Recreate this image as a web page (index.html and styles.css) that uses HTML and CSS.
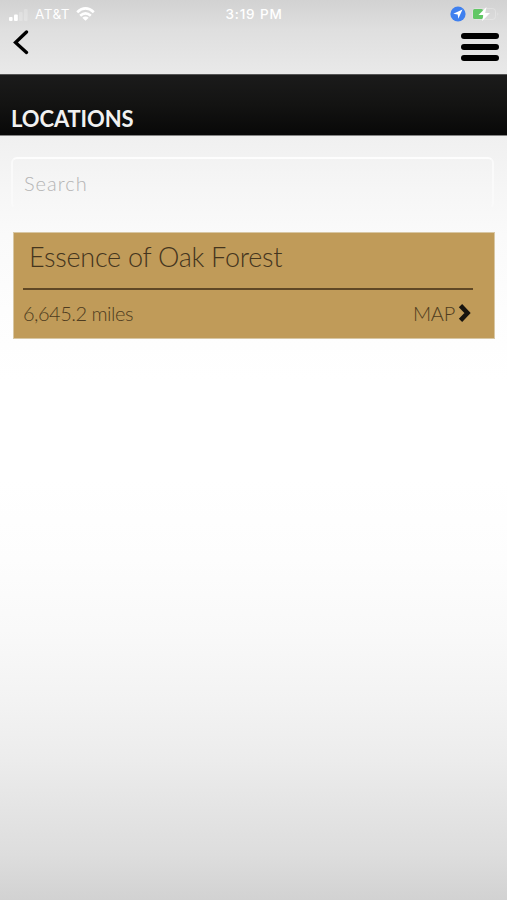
FILE: index.html
```html
<!DOCTYPE html>
<html lang="en">
<head>
<meta charset="utf-8">
<title>Locations</title>
<link rel="stylesheet" href="styles.css">
</head>
<body>
<div class="screen">
  <header class="top">
    <div class="status">
      <div class="carrier">
        <svg width="22" height="14" viewBox="0 0 22 14" fill="#fff"><rect x="1" y="8" width="3.6" height="4" rx="1"/><rect x="6" y="5.5" width="3.8" height="6.500" rx="1"/><rect x="11" y="3" width="3.600" height="9" rx="1" opacity=".22"/><rect x="16" y="0" width="3.600" height="12" rx="1" opacity=".22"/></svg>
        <span class="network">AT&amp;T</span>
        <svg class="wifi" width="19" height="14" viewBox="0 0 19 14" fill="none" stroke="#fff" stroke-width="2.700"><path d="M1.200 5.200Q9.500-2.300 17.800 5.200M4.200 8.700Q9.500 4 14.800 8.700"/><path d="M9.500 13.800L6.300 10.800Q9.500 8.300 12.700 10.800Z" fill="#fff" stroke="none"/></svg>
      </div>
      <time class="clock">3:19 PM</time>
      <div class="indicators">
        <svg width="16" height="16" viewBox="0 0 16 16"><circle cx="8" cy="8" r="7.600" fill="#3f80ef"/><path d="M12.500 3.500L3.300 7.800L7.700 8.400L8.300 12.800Z" fill="#fff"/></svg>
        <svg width="28" height="16" viewBox="0 0 28 16"><rect x=".5" y="2.500" width="23" height="11" rx="3" fill="none" stroke="#fff" opacity=".25"/><path d="M25.500 6v4q1.800-2 0-4" fill="#fff" opacity=".35"/><rect x="1" y="3" width="10" height="10" rx="1.500" fill="#62c766"/><path d="M14.500 1L6.500 9h5l-1.500 6.200L18 7h-4.800Z" fill="#fff"/></svg>
      </div>
    </div>
    <nav class="nav">
      <svg class="back" width="18" height="26" viewBox="0 0 18 26"><path d="M14.500 2L3.500 12.500L14.500 22.500" fill="none" stroke="#000" stroke-width="3.300" stroke-linecap="round" stroke-linejoin="miter"/></svg>
      <div class="menu"><i></i><i></i><i></i></div>
    </nav>
  </header>
  <div class="titlebar"><h1>LOCATIONS</h1></div>
  <main>
    <input class="search" type="text" placeholder="Search" aria-label="Search">
    <article class="card">
      <h2>Essence of Oak Forest</h2>
      <div class="details">
        <span class="distance">6,645.2 miles</span>
        <span class="map">MAP<svg width="14" height="20" viewBox="0 0 14 20"><path d="M2.500 2.700L9.500 10L2.500 17.300" fill="none" stroke="#17140f" stroke-width="4.600"/></svg></span>
      </div>
    </article>
  </main>
</div>
</body>
</html>
```
FILE: styles.css
```css
* { box-sizing: border-box; }
body { margin: 0; font-family: Lato, sans-serif; }
.screen {
  height: 900px;
  overflow: hidden;
  background: linear-gradient(#d2d2d2 0, #dfdfdf 30px, #e9e9e9 74px, #f0f0f0 136px, #f6f6f6 190px, #fafafa 235px, #fdfdfd 310px, #fff 380px, #fff 480px, #fdfdfd 560px, #f9f9f9 630px, #f3f3f3 700px, #ececec 760px, #e4e4e4 810px, #dddddd 855px, #d2d2d2 900px);
}
.top { height: 74px; }
.status {
  height: 28px;
  display: grid;
  grid-template-columns: 1fr auto 1fr;
  align-items: center;
  padding: 0 7px 0 8px;
  color: #fff;
  font: 500 13.5px Inter, sans-serif;
}
.carrier { display: flex; align-items: center; }
.carrier > svg:first-child { margin-top: 3px; }
.network { width: 36px; margin-left: 5px; font-weight: 400; letter-spacing: .5px; }
.wifi { margin: -1px 0 0 5px; }
.clock { letter-spacing: .85px; }
.indicators { display: flex; justify-content: flex-end; gap: 6px; }
.nav { display: flex; justify-content: space-between; padding: 2px 8.500px 0 12px; }
.back { display: block; }
.menu { width: 38px; display: grid; gap: 5px; align-content: start; padding-top: 3px; }
.menu i { height: 6px; border-radius: 3px; background: #000; }
.titlebar {
  height: 62px;
  padding: 31px 11px 0;
  border-top: 1px solid #555;
  border-bottom: 1px solid #858585;
  background: linear-gradient(#1b1b1b, #131312 50%, #080808);
}
h1 { margin: 0; color: #f1f1f1; font-size: 22px; line-height: 26px; font-weight: 700; letter-spacing: -.1px; }
main { padding: 21px 13px 0 11px; }
.search {
  display: block;
  width: 100%;
  height: 52px;
  padding: 0 11px;
  border: 2px solid;
  border-color: #fdfdfd #fafafa transparent;
  border-radius: 6px;
  outline: 0;
  background: #f5f5f500;
  font: 300 20px Lato, sans-serif;
  letter-spacing: 1px;
}
.search::placeholder { color: #b4b4b4; opacity: 1; }
.card {
  height: 107px;
  margin: 22px -1px 0 2px;
  padding: 0 21px 0 9px;
  border: 1px solid #d8c7a4;
  background: #c09b59;
  color: #44351e;
}
.search + .card { margin-top: 23px; }
h2 {
  height: 57px;
  margin: 0;
  padding: 6px 0 0 6px;
  border-bottom: 2px solid #604825;
  font-size: 27px;
  line-height: 36px;
  font-weight: 300;
  letter-spacing: -.28px;
}
.details {
  display: flex;
  justify-content: space-between;
  padding-top: 10px;
  color: #4e3b20;
  font-size: 20px;
  line-height: 26px;
  font-weight: 300;
}
.distance { letter-spacing: -.5px; }
.map { display: flex; align-items: center; gap: 3px; margin-right: 1px; letter-spacing: -.25px; }
.map svg { display: block; }
```
